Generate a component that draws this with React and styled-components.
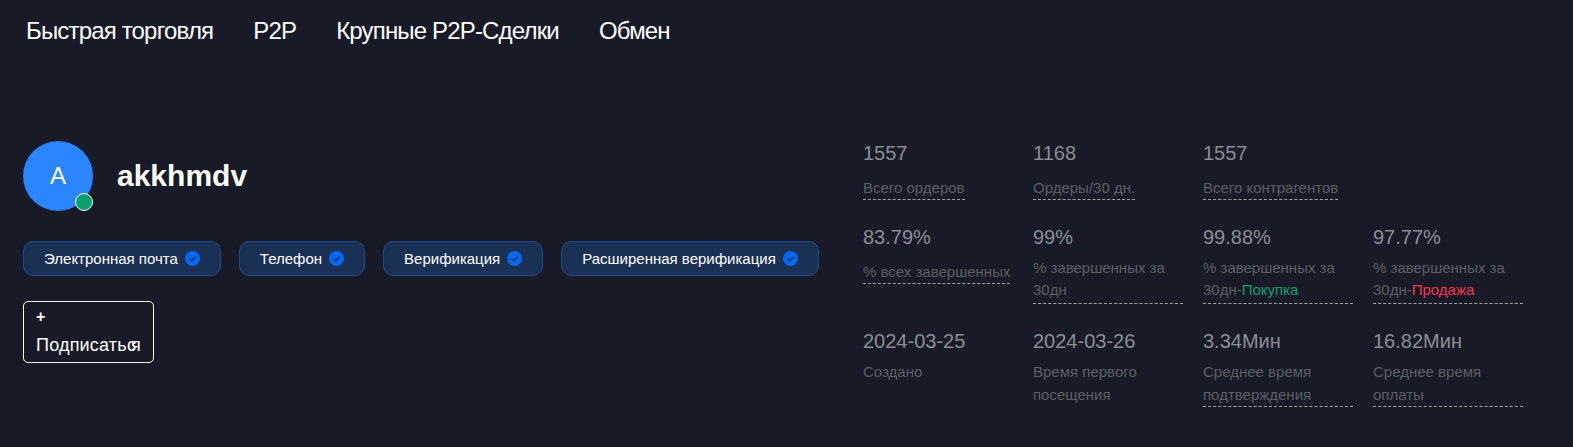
import React from 'react';
import styled, { createGlobalStyle } from 'styled-components';

const GlobalStyle = createGlobalStyle`
  html, body {
    margin: 0;
    background: #181b27;
    font-family: "Liberation Sans", Arial, sans-serif;
  }
`;

const Page = styled.div`
  min-height: 447px;
  background: #181b27;
  color: #fff;
  overflow: hidden;
`;

const Nav = styled.nav`
  display: flex;
  gap: 40px;
  padding: 17px 26px 0;
  height: 45px;
`;

const NavLink = styled.a`
  font-size: 24px;
  line-height: 28px;
  letter-spacing: -0.83px;
  color: #fff;
`;

const Profile = styled.section`
  display: flex;
  padding: 79px 0 0 23px;
`;

const UserSide = styled.div`
  width: 840px;
  flex: none;
`;

const UserRow = styled.div`
  display: flex;
  align-items: center;
  gap: 24px;
`;

const Avatar = styled.div`
  position: relative;
  width: 70px;
  height: 70px;
  border-radius: 50%;
  background: #2a85ff;
  display: flex;
  align-items: center;
  justify-content: center;
  font-size: 24px;
`;

const OnlineDot = styled.span`
  position: absolute;
  right: 0;
  bottom: 0;
  width: 16px;
  height: 16px;
  border-radius: 50%;
  border: 1px solid #fff;
  background: #0aa06e;
`;

const UserName = styled.div`
  font-size: 30px;
  font-weight: 700;
`;

const Badges = styled.div`
  display: flex;
  gap: 18px;
  margin-top: 30px;
`;

const Badge = styled.div`
  display: flex;
  align-items: center;
  gap: 7px;
  height: 33px;
  padding: 0 20px;
  border: 1px solid #1f4a8a;
  border-radius: 10px;
  background: #1a3054;
  font-size: 15px;
  color: #fff;
`;

const FollowButton = styled.button`
  position: relative;
  display: block;
  width: 131px;
  height: 62px;
  margin-top: 25px;
  padding: 0 12px;
  border: 1px solid #fff;
  border-radius: 5px;
  background: transparent;
  color: #fff;
  font-family: inherit;
  font-size: 18px;
  text-align: left;
`;

const Plus = styled.div`
  font-size: 16px;
  font-weight: 700;
  line-height: 26px;
`;

const FollowLabel = styled.div`
  line-height: 30px;
  letter-spacing: 0.2px;
  white-space: nowrap;
`;

const Overlap = styled.span`
  margin-left: -5px;
`;

const Stats = styled.div`
  display: grid;
  grid-template-columns: repeat(4, 150px);
  column-gap: 20px;
  row-gap: 23px;
  align-items: start;
  margin-top: -2px;
`;

const Stat = styled.div`
  min-width: 0;
`;

const Value = styled.div`
  font-size: 20px;
  line-height: 28px;
  color: #8a8d96;
`;

const Label = styled.div`
  display: inline-block;
  margin-top: ${p => p.$offset}px;
  padding-bottom: ${p => p.$pad || 0}px;
  font-size: 15px;
  line-height: ${p => p.$lh || 22}px;
  color: #5c5e66;
  border-bottom: ${p => (p.$plain ? '0' : '1px dashed #a0a2a8')};
`;

const Buy = styled.span`
  color: #0aa06e;
`;

const Sell = styled.span`
  color: #f0364a;
`;

const CheckIcon = () => (
  <svg width="15" height="15" viewBox="0 0 15 15">
    <circle cx="7.5" cy="7.5" r="7.5" fill="#0069f0" />
    <path d="M4.3 7.6l2.3 2.2 4-4" fill="none" stroke="#1a3054" strokeWidth="1.3" />
  </svg>
);

const badges = ['Электронная почта', 'Телефон', 'Верификация', 'Расширенная верификация'];

const stats = [
  { value: '1557', label: 'Всего ордеров', offset: 10 },
  { value: '1168', label: 'Ордеры/30 дн.', offset: 10 },
  { value: '1557', label: 'Всего контрагентов', offset: 10 },
  null,
  { value: '83.79%', label: '% всех завершенных', offset: 10 },
  { value: '99%', label: '% завершенных за 30дн', offset: 6, pad: 2 },
  { value: '99.88%', label: <>% завершенных за 30дн-<Buy>Покупка</Buy></>, offset: 6, pad: 2 },
  { value: '97.77%', label: <>% завершенных за 30дн-<Sell>Продажа</Sell></>, offset: 6, pad: 2 },
  { value: '2024-03-25', label: 'Создано', offset: 6, plain: true },
  { value: '2024-03-26', label: 'Время первого посещения', offset: 5, plain: true, lh: 23 },
  { value: '3.34Мин', label: 'Среднее время подтверждения', offset: 5, lh: 23 },
  { value: '16.82Мин', label: 'Среднее время оплаты', offset: 5, lh: 23 },
];

export default function App() {
  return (
    <Page>
      <GlobalStyle />
      <Nav>
        <NavLink>Быстрая торговля</NavLink>
        <NavLink>P2P</NavLink>
        <NavLink>Крупные P2P-Сделки</NavLink>
        <NavLink>Обмен</NavLink>
      </Nav>
      <Profile>
        <UserSide>
          <UserRow>
            <Avatar>A<OnlineDot /></Avatar>
            <UserName>akkhmdv</UserName>
          </UserRow>
          <Badges>
            {badges.map(name => (
              <Badge key={name}>{name}<CheckIcon /></Badge>
            ))}
          </Badges>
          <FollowButton>
            <Plus>+</Plus>
            <FollowLabel>Подписатьс<Overlap>я</Overlap></FollowLabel>
          </FollowButton>
        </UserSide>
        <Stats>
          {stats.map((s, i) => (
            s ? (
              <Stat key={i}>
                <Value>{s.value}</Value>
                <Label $offset={s.offset} $lh={s.lh} $pad={s.pad} $plain={s.plain}>{s.label}</Label>
              </Stat>
            ) : <Stat key={i} />
          ))}
        </Stats>
      </Profile>
    </Page>
  );
}
